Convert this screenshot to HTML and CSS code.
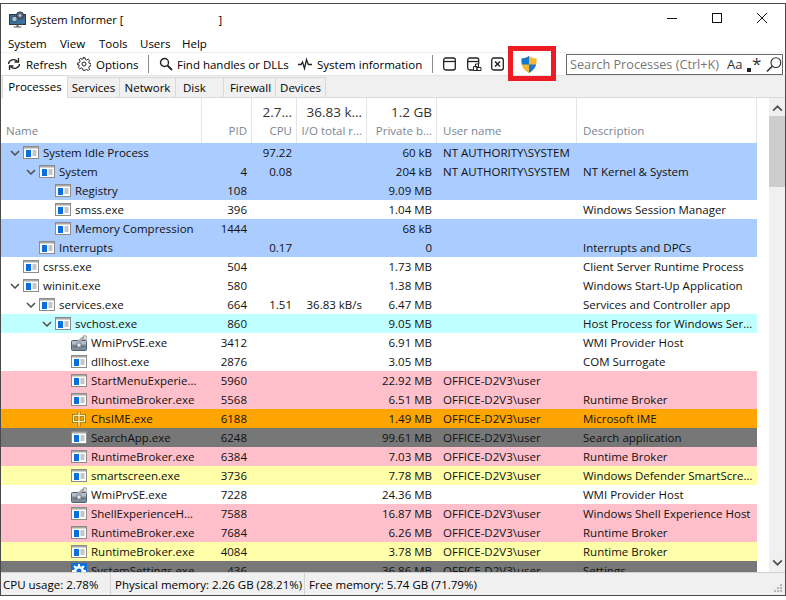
FILE: index.html
```html
<!DOCTYPE html>
<html lang="en">
<head>
<meta charset="utf-8">
<title>System Informer</title>
<link rel="stylesheet" href="styles.css">
</head>
<body>
<svg class="defs" width="0" height="0" aria-hidden="true">
  <symbol id="app" viewBox="0 0 16 13">
    <rect x=".5" y=".5" width="15" height="12" fill="#fff" stroke="#8c8c8c"/>
    <rect x="1" y="1" width="14" height="1.5" fill="#a8a8a8"/>
    <rect x="3" y="4" width="5" height="7" fill="#0a6fdc"/>
    <path d="M9.5 5h4M9.5 7h4M9.5 9h4" stroke="#8c8c8c" fill="none"/>
  </symbol>
  <symbol id="down" viewBox="0 0 10 6"><path d="M1 1l4 4 4-4" fill="none" stroke="#4d4d4d" stroke-width="1.5"/></symbol>
  <symbol id="wmi" viewBox="0 0 16 16">
    <rect x=".5" y="5.500" width="15" height="10" rx="1" fill="#7f8c99" stroke="#56626e"/>
    <rect x="1" y="6" width="14" height="3.500" fill="#b4bfca"/>
    <rect x="2" y="11" width="12" height="1" fill="#5e6a76"/>
    <rect x="6" y="8" width="4" height="4" fill="#e8e8e8" stroke="#56626e" stroke-width=".7"/>
    <path d="M7 7l6-5" stroke="#a9a9a9" stroke-width="2.600"/>
    <path d="M12 4l1-4 3 1.500v2.500l-2 1z" fill="#dcdcdc" stroke="#777" stroke-width=".5"/>
  </symbol>
  <symbol id="ime" viewBox="0 0 16 16">
    <path d="M2.500 4.500h11v6h-11zM8 .5v15" fill="none" stroke="#8a6500" stroke-width="3"/>
    <path d="M2.500 4.500h11v6h-11zM8 .5v15" fill="none" stroke="#fff3a8" stroke-width="1.400"/>
  </symbol>
  <symbol id="gear" viewBox="0 0 16 16">
    <rect width="16" height="16" fill="#0a6fdc"/>
    <circle cx="8" cy="8" r="3.800" fill="none" stroke="#fff" stroke-width="2.600"/>
    <path d="M8 1v3M8 12v3M1 8h3M12 8h3M3 3l2 2M11 11l2 2M13 3l-2 2M5 11l-2 2" stroke="#fff" stroke-width="2"/>
  </symbol>
</svg>

<div class="window">
  <header class="titlebar">
    <svg class="logo" width="17" height="17" viewBox="0 0 17 17">
      <rect x=".5" y="3.500" width="16" height="10" fill="#3d6f9c" stroke="#2b3a48"/>
      <circle cx="5.500" cy="8" r="2.800" fill="#a9c3d8" stroke="#2b3a48" stroke-width=".8"/>
      <circle cx="11" cy="4.500" r="3.600" fill="#5c6b78" stroke="#2b3a48"/>
      <circle cx="11" cy="4.500" r="1.200" fill="#c8d2da"/>
      <path d="M7.500 13.500h2v2h-2zM4.500 15.500h8v1h-8z" fill="#5a5a5a"/>
    </svg>
    <span class="title">System Informer [</span>
    <span class="title title-end">]</span>
    <div class="controls">
      <svg width="12" height="12" viewBox="0 0 12 12"><path d="M1 6.500h10" stroke="#111"/></svg>
      <svg width="12" height="12" viewBox="0 0 12 12"><rect x="1.500" y="1.500" width="9" height="9" fill="none" stroke="#111"/></svg>
      <svg width="12" height="12" viewBox="0 0 12 12"><path d="M1 1l10 10M11 1L1 11" stroke="#111"/></svg>
    </div>
  </header>

  <nav class="menubar">
    <span>System</span><span>View</span><span>Tools</span><span>Users</span><span>Help</span>
  </nav>

  <div class="toolbar">
    <span class="tool t-refresh">
      <svg width="14" height="14" viewBox="0 0 14 14"><path d="M1.500 7a5 4.500 0 0 1 9-2.500M12.500 7a5 4.500 0 0 1-9 2.500" fill="none" stroke="#222" stroke-width="1.300"/><path d="M11.500 1v4h-4M2.500 13V9h4" fill="none" stroke="#222" stroke-width="1.300"/></svg>
      Refresh
    </span>
    <span class="tool t-options">
      <svg width="14" height="14" viewBox="0 0 14 14"><circle cx="7" cy="7" r="2" fill="none" stroke="#222"/><path d="M6 .7h2l.4 1.800 1.300.6 1.600-1 1.400 1.400-1 1.600.6 1.300 1.800.4v2l-1.800.4-.6 1.300 1 1.600-1.400 1.400-1.600-1-1.300.6L8 13.300H6l-.4-1.800-1.300-.6-1.600 1-1.400-1.400 1-1.600-.6-1.300L.7 8V6l1.800-.4.600-1.300-1-1.600 1.400-1.400 1.600 1 1.300-.6z" fill="none" stroke="#222"/></svg>
      Options
    </span>
    <i class="sep"></i>
    <span class="tool t-find">
      <svg width="14" height="14" viewBox="0 0 14 14"><circle cx="5.500" cy="5.500" r="4" fill="none" stroke="#222" stroke-width="1.400"/><path d="M8.500 8.500l4.500 4.500" stroke="#222" stroke-width="1.800"/></svg>
      Find handles or DLLs
    </span>
    <span class="tool t-info">
      <svg width="14" height="14" viewBox="0 0 14 14"><path d="M0 7.500h3l1.500-2.500 2 6.500L8.500 2.500l1.800 5H14" fill="none" stroke="#222" stroke-width="1.300"/></svg>
      System information
    </span>
    <i class="sep"></i>
    <svg class="ic ic-a" width="13" height="14" viewBox="0 0 13 14"><rect x=".7" y="1" width="11.600" height="12" rx="2" fill="none" stroke="#222" stroke-width="1.300"/><path d="M1 4.500h11" stroke="#222" stroke-width="1.300"/></svg>
    <svg class="ic ic-b" width="15" height="14" viewBox="0 0 15 14"><rect x=".7" y="1" width="11" height="12" rx="2" fill="none" stroke="#222" stroke-width="1.300"/><path d="M1 4.500h10" stroke="#222" stroke-width="1.300"/><rect x="6" y="7" width="9" height="7" fill="#fff"/><path d="M6.500 9.500h3.500v4H6.500zM10 10.500h4v3h-4zM8.500 7h3v3h-3z" fill="none" stroke="#222"/></svg>
    <svg class="ic ic-c" width="13" height="14" viewBox="0 0 13 14"><rect x=".7" y="1" width="11.600" height="12" rx="2" fill="none" stroke="#222" stroke-width="1.300"/><path d="M4 4.500l5 5M9 4.500l-5 5" stroke="#222" stroke-width="1.500"/></svg>
    <svg class="ic ic-shield" width="16" height="17" viewBox="0 0 16 17"><path d="M8 0C6 1.500 3.500 2.300.5 2.500 0 8 1 13.500 8 17c7-3.500 8-9 7.500-14.500C12.500 2.300 10 1.500 8 0z" fill="#f5b82e"/><path d="M8 0C6 1.500 3.500 2.300.5 2.500.4 4.500.5 6.500 1 8.500h7zM8 8.500h7c-.9 3.300-3 6.200-7 8.500z" fill="#1479d4"/></svg>
    <div class="search">
      <span class="search-text">Search Processes (Ctrl+K)</span>
      <span class="search-aa">Aa</span>
      <span class="search-re"><i></i>*</span>
      <svg width="16" height="17" viewBox="0 0 17 17"><circle cx="10.500" cy="6.500" r="5.200" fill="none" stroke="#333" stroke-width="1.200"/><path d="M6.500 10.500L1 16" stroke="#333" stroke-width="1.600"/></svg>
    </div>
  </div>

  <div class="tabs">
    <span class="tab active">Processes</span>
    <span class="tab w-services">Services</span>
    <span class="tab w-network">Network</span>
    <span class="tab w-disk">Disk</span>
    <span class="tab w-firewall">Firewall</span>
    <span class="tab w-devices">Devices</span>
  </div>

  <div class="content">
    <div class="tree">
      <div class="head">
        <div class="hc left"><b></b><span>Name</span></div>
        <div class="hc"><b></b><span>PID</span></div>
        <div class="hc"><b>2.7…</b><span>CPU</span></div>
        <div class="hc"><b>36.83 k…</b><span>I/O total r…</span></div>
        <div class="hc"><b>1.2 GB</b><span>Private b…</span></div>
        <div class="hc left pad"><b></b><span>User name</span></div>
        <div class="hc left pad"><b></b><span>Description</span></div>
      </div>
      <div class="rows">
        <div class="row blue"><div class="name d0"><svg class="tw"><use href="#down"/></svg><svg class="ico"><use href="#app"/></svg>System Idle Process</div><div class="n"></div><div class="n">97.22</div><div class="n"></div><div class="n">60 kB</div><div class="t">NT AUTHORITY\SYSTEM</div><div class="t"></div></div>
        <div class="row blue"><div class="name d1"><svg class="tw"><use href="#down"/></svg><svg class="ico"><use href="#app"/></svg>System</div><div class="n">4</div><div class="n">0.08</div><div class="n"></div><div class="n">204 kB</div><div class="t">NT AUTHORITY\SYSTEM</div><div class="t">NT Kernel &amp; System</div></div>
        <div class="row blue"><div class="name d2"><svg class="ico"><use href="#app"/></svg>Registry</div><div class="n">108</div><div class="n"></div><div class="n"></div><div class="n">9.09 MB</div><div class="t"></div><div class="t"></div></div>
        <div class="row"><div class="name d2"><svg class="ico"><use href="#app"/></svg>smss.exe</div><div class="n">396</div><div class="n"></div><div class="n"></div><div class="n">1.04 MB</div><div class="t"></div><div class="t">Windows Session Manager</div></div>
        <div class="row blue"><div class="name d2"><svg class="ico"><use href="#app"/></svg>Memory Compression</div><div class="n">1444</div><div class="n"></div><div class="n"></div><div class="n">68 kB</div><div class="t"></div><div class="t"></div></div>
        <div class="row blue"><div class="name d1"><svg class="ico"><use href="#app"/></svg>Interrupts</div><div class="n"></div><div class="n">0.17</div><div class="n"></div><div class="n">0</div><div class="t"></div><div class="t">Interrupts and DPCs</div></div>
        <div class="row"><div class="name d0"><svg class="ico"><use href="#app"/></svg>csrss.exe</div><div class="n">504</div><div class="n"></div><div class="n"></div><div class="n">1.73 MB</div><div class="t"></div><div class="t">Client Server Runtime Process</div></div>
        <div class="row"><div class="name d0"><svg class="tw"><use href="#down"/></svg><svg class="ico"><use href="#app"/></svg>wininit.exe</div><div class="n">580</div><div class="n"></div><div class="n"></div><div class="n">1.38 MB</div><div class="t"></div><div class="t">Windows Start-Up Application</div></div>
        <div class="row"><div class="name d1"><svg class="tw"><use href="#down"/></svg><svg class="ico"><use href="#app"/></svg>services.exe</div><div class="n">664</div><div class="n">1.51</div><div class="n">36.83 kB/s</div><div class="n">6.47 MB</div><div class="t"></div><div class="t">Services and Controller app</div></div>
        <div class="row cyan"><div class="name d2"><svg class="tw"><use href="#down"/></svg><svg class="ico"><use href="#app"/></svg>svchost.exe</div><div class="n">860</div><div class="n"></div><div class="n"></div><div class="n">9.05 MB</div><div class="t"></div><div class="t">Host Process for Windows Ser…</div></div>
        <div class="row"><div class="name d3"><svg class="ico tall"><use href="#wmi"/></svg>WmiPrvSE.exe</div><div class="n">3412</div><div class="n"></div><div class="n"></div><div class="n">6.91 MB</div><div class="t"></div><div class="t">WMI Provider Host</div></div>
        <div class="row"><div class="name d3"><svg class="ico"><use href="#app"/></svg>dllhost.exe</div><div class="n">2876</div><div class="n"></div><div class="n"></div><div class="n">3.05 MB</div><div class="t"></div><div class="t">COM Surrogate</div></div>
        <div class="row pink"><div class="name d3"><svg class="ico"><use href="#app"/></svg>StartMenuExperie…</div><div class="n">5960</div><div class="n"></div><div class="n"></div><div class="n">22.92 MB</div><div class="t">OFFICE-D2V3\user</div><div class="t"></div></div>
        <div class="row pink"><div class="name d3"><svg class="ico"><use href="#app"/></svg>RuntimeBroker.exe</div><div class="n">5568</div><div class="n"></div><div class="n"></div><div class="n">6.51 MB</div><div class="t">OFFICE-D2V3\user</div><div class="t">Runtime Broker</div></div>
        <div class="row orange"><div class="name d3"><svg class="ico tall"><use href="#ime"/></svg>ChsIME.exe</div><div class="n">6188</div><div class="n"></div><div class="n"></div><div class="n">1.49 MB</div><div class="t">OFFICE-D2V3\user</div><div class="t">Microsoft IME</div></div>
        <div class="row gray"><div class="name d3"><svg class="ico"><use href="#app"/></svg>SearchApp.exe</div><div class="n">6248</div><div class="n"></div><div class="n"></div><div class="n">99.61 MB</div><div class="t">OFFICE-D2V3\user</div><div class="t">Search application</div></div>
        <div class="row pink"><div class="name d3"><svg class="ico"><use href="#app"/></svg>RuntimeBroker.exe</div><div class="n">6384</div><div class="n"></div><div class="n"></div><div class="n">7.03 MB</div><div class="t">OFFICE-D2V3\user</div><div class="t">Runtime Broker</div></div>
        <div class="row yellow"><div class="name d3"><svg class="ico"><use href="#app"/></svg>smartscreen.exe</div><div class="n">3736</div><div class="n"></div><div class="n"></div><div class="n">7.78 MB</div><div class="t">OFFICE-D2V3\user</div><div class="t">Windows Defender SmartScre…</div></div>
        <div class="row"><div class="name d3"><svg class="ico tall"><use href="#wmi"/></svg>WmiPrvSE.exe</div><div class="n">7228</div><div class="n"></div><div class="n"></div><div class="n">24.36 MB</div><div class="t"></div><div class="t">WMI Provider Host</div></div>
        <div class="row pink"><div class="name d3"><svg class="ico"><use href="#app"/></svg>ShellExperienceH…</div><div class="n">7588</div><div class="n"></div><div class="n"></div><div class="n">16.87 MB</div><div class="t">OFFICE-D2V3\user</div><div class="t">Windows Shell Experience Host</div></div>
        <div class="row pink"><div class="name d3"><svg class="ico"><use href="#app"/></svg>RuntimeBroker.exe</div><div class="n">7684</div><div class="n"></div><div class="n"></div><div class="n">6.26 MB</div><div class="t">OFFICE-D2V3\user</div><div class="t">Runtime Broker</div></div>
        <div class="row yellow"><div class="name d3"><svg class="ico"><use href="#app"/></svg>RuntimeBroker.exe</div><div class="n">4084</div><div class="n"></div><div class="n"></div><div class="n">3.78 MB</div><div class="t">OFFICE-D2V3\user</div><div class="t">Runtime Broker</div></div>
        <div class="row gray"><div class="name d3"><svg class="ico tall"><use href="#gear"/></svg>SystemSettings.exe</div><div class="n">436</div><div class="n"></div><div class="n"></div><div class="n">36.86 MB</div><div class="t">OFFICE-D2V3\user</div><div class="t">Settings</div></div>
      </div>
    </div>
    <div class="scrollbar">
      <svg width="11" height="7" viewBox="0 0 10 6"><path d="M1 5l4-4 4 4" fill="none" stroke="#555" stroke-width="1.600"/></svg>
      <div class="thumb"></div>
      <svg class="sb-down" width="11" height="7" viewBox="0 0 10 6"><path d="M1 1l4 4 4-4" fill="none" stroke="#555" stroke-width="1.600"/></svg>
    </div>
  </div>

  <footer class="status">
    <span class="cell c1">CPU usage: 2.78%</span>
    <span class="cell c2">Physical memory: 2.26 GB (28.21%)</span>
    <span class="cell c3">Free memory: 5.74 GB (71.79%)</span>
    <svg class="grip" width="10" height="10" viewBox="0 0 10 10"><path d="M7 1h2v2H7zM4 4h2v2H4zM7 4h2v2H7zM1 7h2v2H1zM4 7h2v2H4zM7 7h2v2H7z" fill="#b5b5b5"/></svg>
  </footer>

  <div class="highlight"></div>
</div>
</body>
</html>
```
FILE: styles.css
```css
* { box-sizing: border-box; }
html, body { margin: 0; padding: 0; background: #fff; }
body { font-family: "Open Sans", "Noto Sans", sans-serif; font-size: 11.5px; color: #000; height: 600px; overflow: hidden; }
.defs { position: absolute; }

.window { position: relative; margin-top: 3px; width: 786px; height: 593px; border: 1px solid #4a4a4a; display: flex; flex-direction: column; background: #fff; overflow: hidden; }

.titlebar { height: 31px; display: flex; align-items: center; flex: none; padding-left: 8px; }
.logo { margin-right: 4px; }
.title { font-size: 11.2px; }
.title-end { margin-left: 95px; }
.controls { margin-left: auto; display: flex; gap: 33px; padding: 0 17px 3px 0; }

.menubar { height: 17px; flex: none; display: flex; padding-left: 7px; align-items: center; line-height: 17px; }
.menubar span:nth-child(1) { width: 52px; }
.menubar span:nth-child(2) { width: 39px; }
.menubar span:nth-child(3) { width: 41px; }
.menubar span:nth-child(4) { width: 42px; }

.toolbar { height: 24px; flex: none; display: flex; align-items: center; border-top: 1px solid #f0f0f0; border-bottom: 1px solid #e4e4e4; padding-left: 6px; }
.tool { display: flex; align-items: center; gap: 5px; white-space: nowrap; flex: none; }
.t-refresh { width: 70px; }
.t-options { width: 71px; }
.t-find { width: 139px; margin-left: 10px; gap: 4px; }
.t-info { width: 134px; }
.sep { display: block; width: 1px; height: 18px; background: #8c8c8c; flex: none; }
.ic { flex: none; }
.ic-a { margin-left: 10px; }
.ic-b { margin-left: 11px; }
.ic-c { margin-left: 9px; }
.ic-shield { margin-left: 17px; }
.search { margin-left: 29px; width: 217px; height: 21px; border: 1px solid #6a6a6a; display: flex; align-items: center; padding-left: 3px; white-space: nowrap; flex: none; }
.search-text { color: #777; font-size: 12.7px; line-height: 19px; padding-top: 1px; width: 157px; flex: none; }
.search-aa { color: #333; font-size: 13px; line-height: 19px; padding-top: 1px; width: 20px; flex: none; }
.search-re { color: #333; width: 19px; font-size: 17px; line-height: 16px; position: relative; padding-left: 5px; flex: none; }
.search-re i { position: absolute; left: 0; bottom: 0; width: 4px; height: 4px; background: #222; }

.tabs { height: 22px; flex: none; background: #f0f0f0; display: flex; align-items: flex-end; padding-left: 1px; border-bottom: 1px solid #d9d9d9; }
.tab { height: 20px; border: 1px solid #d9d9d9; border-bottom: 0; border-left: 0; text-align: center; line-height: 20px; background: #f0f0f0; flex: none; }
.tab.active { height: 23px; width: 66px; background: #fff; margin-bottom: -1px; border-left: 1px solid #d9d9d9; line-height: 21px; }
.w-services { width: 52px; }
.w-network { width: 56px; }
.w-disk { width: 48px; text-align: left; padding-left: 7px; }
.w-firewall { width: 52px; padding-left: 2px; }
.w-devices { width: 50px; }

.content { flex: 1; min-height: 0; display: flex; background: #fff; }
.tree { width: 756px; margin-right: 12px; flex: none; display: flex; flex-direction: column; overflow: hidden; }
.head, .row { display: grid; grid-template-columns: 201px 50px 45px 70px 70px 140px 180px; }
.head { height: 45px; flex: none; }
.hc { border-right: 1px solid #e5e5e5; display: flex; flex-direction: column; align-items: flex-end; padding-right: 4px; white-space: nowrap; overflow: hidden; }
.hc b { font-weight: 400; height: 23px; line-height: 28px; font-size: 13.5px; color: #333; flex: none; }
.hc span { line-height: 19px; color: #7b8694; }
.hc.left { align-items: flex-start; padding: 0 0 0 5px; }
.hc.pad { padding-left: 6px; }

.rows { flex: 1; min-height: 0; overflow: hidden; }
.row { height: 19px; line-height: 19px; white-space: nowrap; color: #111; }
.blue { background: #aaccff; }
.cyan { background: #c0ffff; }
.pink { background: #ffc0cb; }
.orange { background: #ffa500; }
.gray { background: #777777; }
.yellow { background: #ffffaa; }
.name { display: flex; align-items: center; position: relative; }
.d0 { padding-left: 22px; }
.d1 { padding-left: 38px; }
.d2 { padding-left: 54px; }
.d3 { padding-left: 70px; }
.ico { width: 16px; height: 13px; margin-right: 4px; flex: none; }
.ico.tall { height: 16px; }
.tw { position: absolute; width: 10px; height: 6px; margin-left: -13px; }
.n { text-align: right; padding-right: 5px; }
.t { padding-left: 6px; overflow: hidden; }

.scrollbar { width: 16px; flex: none; background: #f0f0f0; display: flex; flex-direction: column; align-items: center; padding-top: 7px; }
.thumb { width: 100%; height: 71px; background: #cdcdcd; margin-top: 4px; flex: none; }
.sb-down { margin-top: auto; margin-bottom: 6px; }

.status { height: 23px; flex: none; background: #f0f0f0; border-top: 1px solid #d0d0d0; display: flex; align-items: center; position: relative; }
.cell { height: 100%; display: flex; align-items: center; white-space: nowrap; padding-left: 2px; border-right: 1px solid #d4d4d4; flex: none; }
.c1 { width: 110px; }
.c2 { width: 194px; padding-left: 4px; }
.c3 { border-right: 0; padding-left: 4px; }
.grip { position: absolute; right: 2px; bottom: 2px; }

.highlight { position: absolute; left: 507px; top: 42px; width: 48px; height: 35px; border: 5px solid #ed1c24; }
```
